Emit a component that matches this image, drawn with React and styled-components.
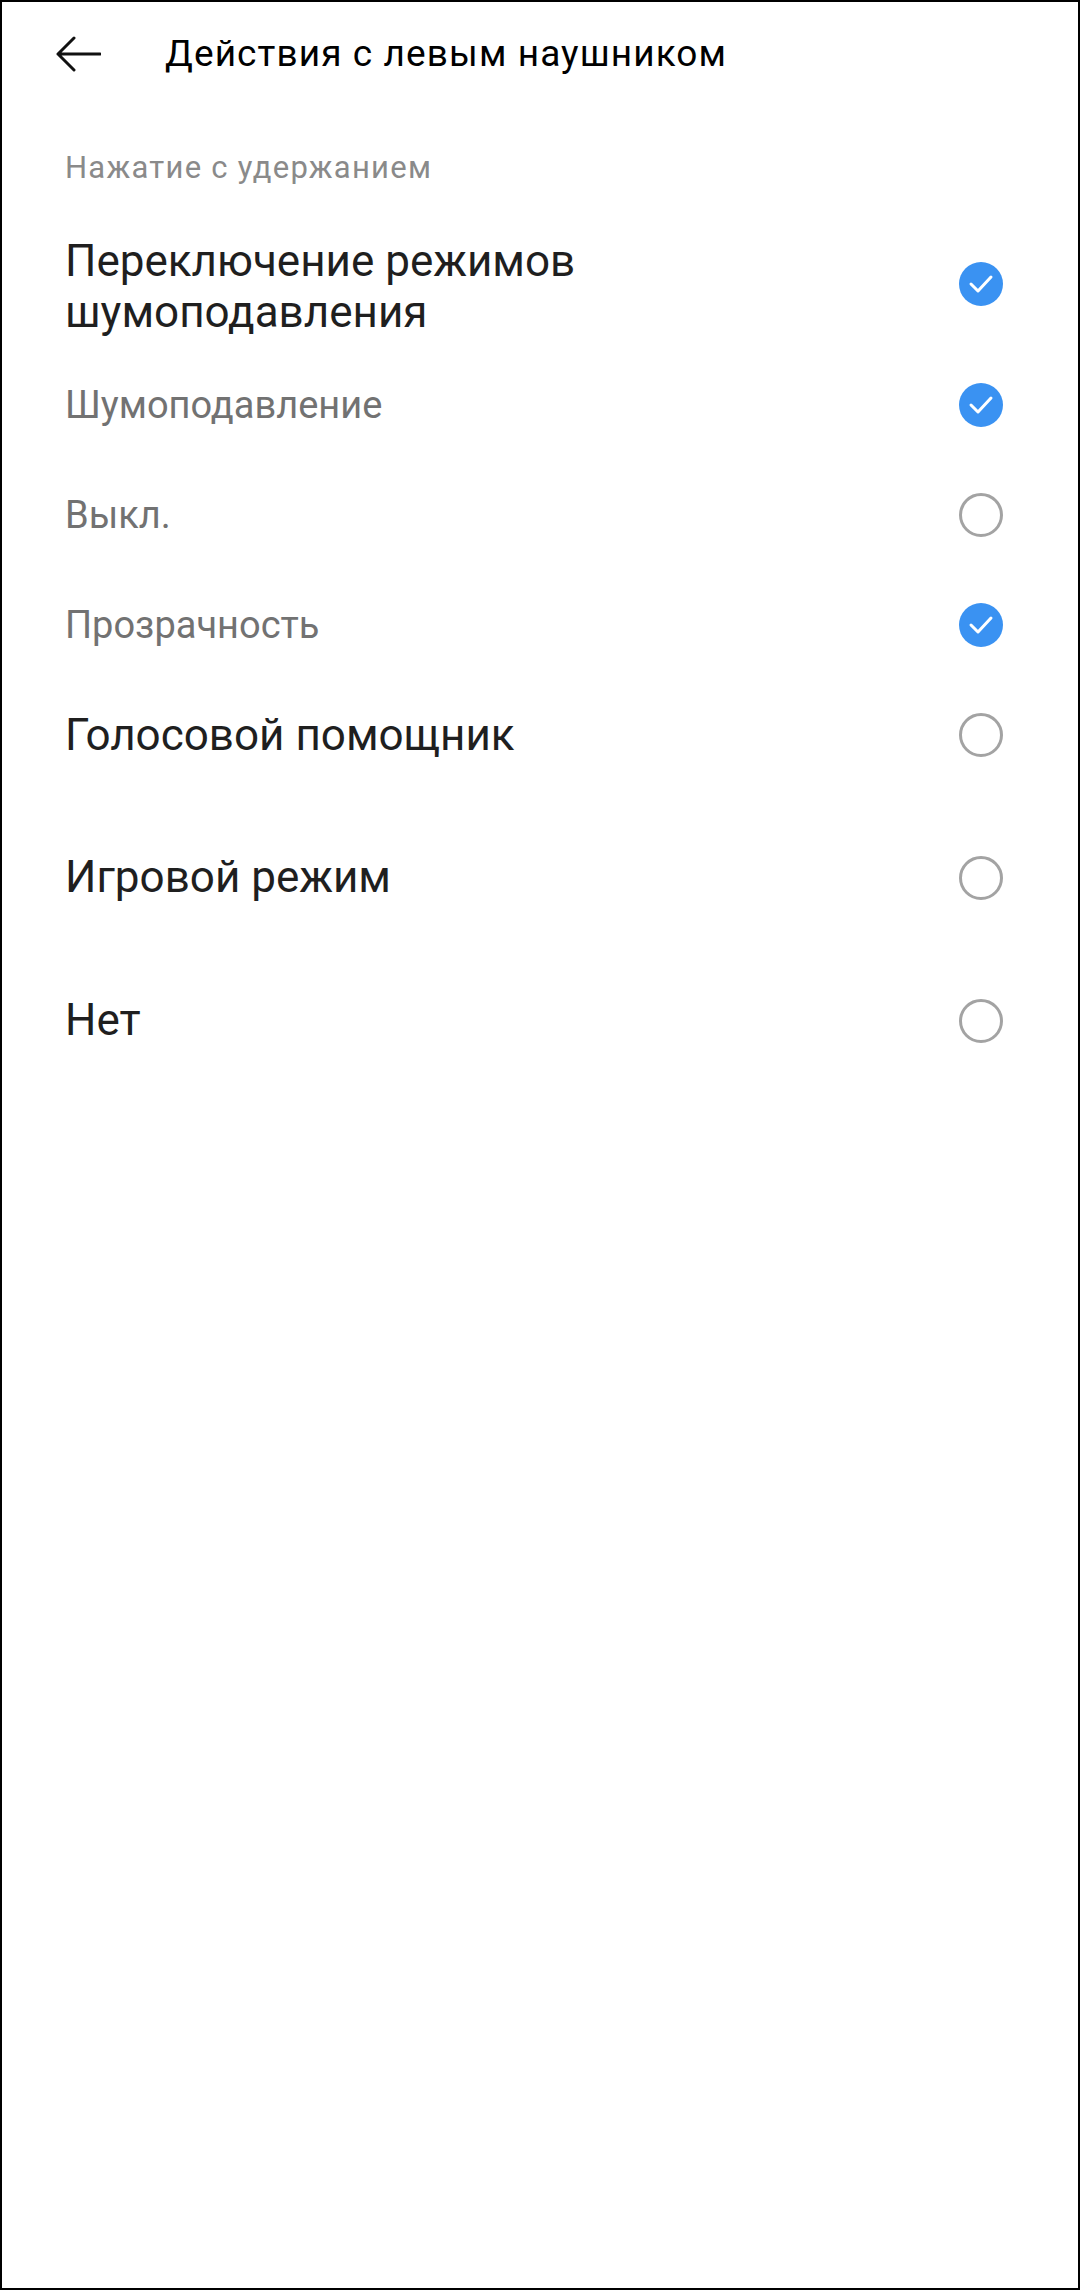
import React from 'react'
import styled, { createGlobalStyle } from 'styled-components'

const GlobalStyle = createGlobalStyle`
  html, body {
    margin: 0;
    padding: 0;
    background: #fff;
  }
  * {
    box-sizing: border-box;
  }
`

// options of the long-press action
const options = [
  { label: ['Переключение режимов', 'шумоподавления'], tone: 'main', checked: true, h: 133, pt: 6 },
  { label: ['Шумоподавление'], tone: 'sub', checked: true, h: 110 },
  { label: ['Выкл.'], tone: 'sub', checked: false, h: 110 },
  { label: ['Прозрачность'], tone: 'sub', checked: true, h: 110 },
  { label: ['Голосовой помощник'], tone: 'main', checked: false, h: 110, mb: 16 },
  { label: ['Игровой режим'], tone: 'main', checked: false, h: 143 },
  { label: ['Нет'], tone: 'main', checked: false, h: 143 },
]

const BackArrow = () => (
  <svg width="46" height="36" viewBox="0 0 46 36" fill="none">
    <path
      d="M3 18 H45 M3 18 L19 2 M3 18 L19 34"
      stroke="#111"
      strokeWidth="3"
      strokeLinecap="round"
      strokeLinejoin="round"
    />
  </svg>
)

const Mark = ({ checked }) =>
  checked ? (
    <svg width="44" height="44" viewBox="0 0 44 44">
      <circle cx="22" cy="22" r="22" fill="#3a92f2" />
      <path
        d="M12 22 L19 29 L32 15"
        fill="none"
        stroke="#fff"
        strokeWidth="3"
        strokeLinecap="round"
        strokeLinejoin="round"
      />
    </svg>
  ) : (
    <svg width="44" height="44" viewBox="0 0 44 44">
      <circle cx="22" cy="22" r="20.5" fill="none" stroke="#a3a3a3" strokeWidth="3" />
    </svg>
  )

const ActionsScreen = () => {
  return (
    <Frame>
      <GlobalStyle />
      <Toolbar>
        <BackButton>
          <BackArrow />
        </BackButton>
        <Title>Действия с левым наушником</Title>
      </Toolbar>

      <SectionTitle>Нажатие с удержанием</SectionTitle>

      <List>
        {options.map((opt) => (
          <Row key={opt.label[0]} $h={opt.h} $mb={opt.mb || 0}>
            <Label $tone={opt.tone} $pt={opt.pt || 0}>
              {opt.label.map((line, i) => (
                <div key={i}>{line}</div>
              ))}
            </Label>
            <Mark checked={opt.checked} />
          </Row>
        ))}
      </List>
    </Frame>
  )
}

const Frame = styled.div`
  min-height: 100vh;
  border: 2px solid #000;
  background: #fff;
  font-family: Roboto, 'Noto Sans', Arial, sans-serif;
`

const Toolbar = styled.div`
  height: 104px;
  display: flex;
  align-items: center;
  padding-left: 53px;
`

const BackButton = styled.div`
  width: 46px;
  height: 36px;
  display: flex;
  align-items: center;
  margin-right: 64px;
`

const Title = styled.h1`
  margin: 0;
  font-size: 37px;
  font-weight: 400;
  line-height: 44px;
  letter-spacing: 1.1px;
  color: #000;
`

const SectionTitle = styled.div`
  margin-top: 42px;
  padding-left: 63px;
  font-size: 31px;
  line-height: 40px;
  letter-spacing: 1.25px;
  color: #8a8a8a;
`

const List = styled.div`
  margin-top: 29px;
  display: flex;
  flex-direction: column;
`

const Row = styled.div`
  height: ${(p) => p.$h}px;
  margin-bottom: ${(p) => p.$mb}px;
  display: flex;
  align-items: center;
  justify-content: space-between;
  padding: 0 75px 0 63px;
`

const Label = styled.div`
  padding-top: ${(p) => p.$pt}px;
  font-size: ${(p) => (p.$tone === 'sub' ? 38 : 44)}px;
  line-height: ${(p) => (p.$tone === 'sub' ? 46 : 51)}px;
  color: ${(p) => (p.$tone === 'sub' ? '#727272' : '#1f1f1f')};
`

export default ActionsScreen
